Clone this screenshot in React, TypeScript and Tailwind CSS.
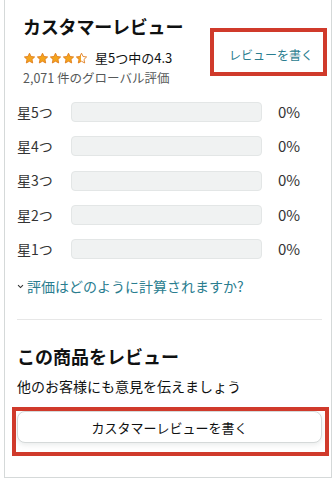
import React from "react";

const FONT = '"Noto Sans CJK JP", "Noto Sans", "Liberation Sans", sans-serif';

const STAR =
  "M12 2.2l2.9 6.1 6.6.8-4.9 4.6 1.3 6.6L12 17l-5.9 3.3 1.3-6.6L2.5 9.1l6.6-.8z";

function Star({ half }: { half?: boolean }) {
  return (
    <svg width="13" height="13" viewBox="0 0 24 24" className="shrink-0">
      <defs>
        <linearGradient id="half-star">
          <stop offset="50%" stopColor="#f4a41d" />
          <stop offset="50%" stopColor="#ffffff" />
        </linearGradient>
      </defs>
      <path
        d={STAR}
        fill={half ? "url(#half-star)" : "#f4a41d"}
        stroke="#e07b1a"
        strokeWidth="1.6"
        strokeLinejoin="round"
      />
    </svg>
  );
}

function Stars() {
  return (
    <div className="flex items-center">
      <Star />
      <Star />
      <Star />
      <Star />
      <Star half />
    </div>
  );
}

function BarRow({ label }: { label: string }) {
  return (
    <li className="flex h-[34.3px] items-center">
      <span className="w-[54px] text-[14px] text-[#333]">{label}</span>
      <div className="h-[20px] w-[191px] rounded-[4px] border border-[#e3e6e6] bg-[#f0f2f2]" />
      <span className="ml-[16px] text-[15px] text-[#333]">0%</span>
    </li>
  );
}

export default function App() {
  return (
    <div
      className="h-[479px] w-[335px] bg-white text-[#0f1111]"
      style={{ fontFamily: FONT }}
    >
      <div className="relative ml-[4px] h-[478px] w-[328px] border-x border-b border-[#d5d9d9] pl-[12px] pr-[9px]">
        {/* header */}
        <div className="flex justify-between pt-[13px]">
          <div className="pl-[6px]">
            <h2 className="text-[18px] font-bold leading-[26px] tracking-[-0.2px]">
              カスタマーレビュー
            </h2>
            <div className="mt-[10px] flex h-[18px] items-center gap-[7px]">
              <Stars />
              <span className="text-[13px] leading-[18px]">星5つ中の4.3</span>
            </div>
            <p className="mt-[2px] text-[12.5px] leading-[18px] text-[#565959]">
              2,071 件のグローバル評価
            </p>
          </div>
          <a className="mr-[9px] mt-[33px] text-[12px] leading-[18px] text-[#2a7d8f]">
            レビューを書く
          </a>
        </div>

        {/* histogram */}
        <ul className="mt-[8px] flex flex-col">
          <BarRow label="星5つ" />
          <BarRow label="星4つ" />
          <BarRow label="星3つ" />
          <BarRow label="星2つ" />
          <BarRow label="星1つ" />
        </ul>

        <button className="mt-[10px] flex items-center gap-[3px] text-[14px] leading-[20px] text-[#2a7d8f]">
          <svg width="7" height="7" viewBox="0 0 10 10" className="text-[#333]">
            <path
              d="M1.5 3l3.5 3.5L8.5 3"
              fill="none"
              stroke="currentColor"
              strokeWidth="1.6"
            />
          </svg>
          評価はどのように計算されますか?
        </button>

        <div className="mt-[23px] h-px bg-[#e7e7e7]" />

        <h2 className="mt-[23px] text-[18px] font-bold leading-[26px]">この商品をレビュー</h2>
        <p className="mt-[7px] text-[14px] leading-[20px]">他のお客様にも意見を伝えましょう</p>
        <button className="mt-[15px] flex h-[32px] w-full items-center justify-center rounded-[8px] border border-[#d5d9d9] bg-white text-[13px] shadow-[0_2px_5px_rgba(213,217,217,0.5)]">
          カスタマーレビューを書く
        </button>

        {/* annotation boxes */}
        <div className="pointer-events-none absolute left-[205px] top-[28px] h-[48px] w-[117px] border-[4px] border-[#d03a2b]" />
        <div className="pointer-events-none absolute left-[7px] top-[407px] h-[49px] w-[317px] border-[4px] border-[#d03a2b]" />
      </div>
    </div>
  );
}
